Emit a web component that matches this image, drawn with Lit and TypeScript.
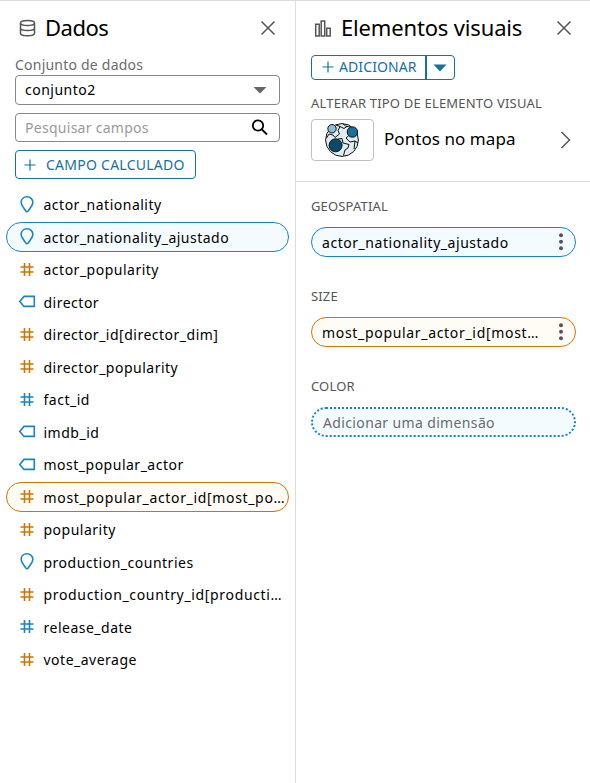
import { LitElement, html, css, svg, nothing } from "lit";
import { customElement, property } from "lit/decorators.js";

type Kind = "geo" | "number" | "text" | "date";
interface Field { name: string; kind: Kind; used?: boolean }

const FIELDS: Field[] = [
  { name: "actor_nationality", kind: "geo" },
  { name: "actor_nationality_ajustado", kind: "geo", used: true },
  { name: "actor_popularity", kind: "number" },
  { name: "director", kind: "text" },
  { name: "director_id[director_dim]", kind: "number" },
  { name: "director_popularity", kind: "number" },
  { name: "fact_id", kind: "date" },
  { name: "imdb_id", kind: "text" },
  { name: "most_popular_actor", kind: "text" },
  { name: "most_popular_actor_id[most_po…", kind: "number", used: true },
  { name: "popularity", kind: "number" },
  { name: "production_countries", kind: "geo" },
  { name: "production_country_id[producti…", kind: "number" },
  { name: "release_date", kind: "date" },
  { name: "vote_average", kind: "number" },
];

const pin = svg`<path d="M9 .8C5.7 .8 3.2 3.1 3.2 6.2C3.2 9.3 6 12.2 7.7 14.8Q9 16.6 10.3 14.8C12 12.2 14.8 9.3 14.8 6.2C14.8 3.1 12.3 .8 9 .8Z"/>`;
const hash = svg`<path d="M6.5 2V15M11.5 2V15M2.5 6H15.5M2.5 11H15.5"/>`;
const tag = svg`<path d="M6 3.4H16.3V13.4H6L1.8 8.4Z"/>`;

@customElement("field-icon")
export class FieldIcon extends LitElement {
  @property() kind: Kind = "text";
  static styles = css`
    :host { display: block; width: 18px; height: 18px; color: #1b84be; }
    :host([kind="number"]) { color: #cc7606; }
    svg { display: block; fill: none; stroke: currentColor; stroke-width: 1.6; }
  `;
  render() {
    const shape = this.kind === "geo" ? pin : this.kind === "text" ? tag : hash;
    return html`<svg width="18" height="18" viewBox="0 0 18 18">${shape}</svg>`;
  }
}

@customElement("field-well")
export class FieldWell extends LitElement {
  @property() label = "";
  @property() value = "";
  @property() tone = "dimension";
  static styles = css`
    :host { display: block; height: 90px; }
    .label { font-size: 13px; line-height: 18px; letter-spacing: 0.16px; color: #555; }
    .pill {
      box-sizing: border-box; height: 30px; width: 265px; margin-top: 12px; padding: 0 10px;
      display: flex; align-items: center; justify-content: space-between;
      border: 1px solid #1b84be; border-radius: 15px; background: #f3fbff;
      font-size: 14px; letter-spacing: 0.54px; color: #000; white-space: nowrap;
    }
    .measure { border-color: #cc7606; background: #fffcf5; letter-spacing: 0.68px; }
    .empty { border: 2px dotted #1b84be; color: #6b6b6b; letter-spacing: 0.36px; }
    svg { display: block; fill: #555; }
  `;
  render() {
    return html`
      <div class="label">${this.label}</div>
      <div class="pill ${this.tone}">
        <span>${this.value}</span>
        ${this.tone === "empty" ? nothing : html`<svg width="8" height="18" viewBox="0 0 8 18">
          <circle cx="4" cy="2.2" r="2"/><circle cx="4" cy="8.7" r="2"/><circle cx="4" cy="15.2" r="2"/></svg>`}
      </div>`;
  }
}

@customElement("app-root")
export class AppRoot extends LitElement {
  static styles = css`
    :host {
      display: grid; grid-template-columns: 295px 295px; box-sizing: border-box;
      width: 590px; height: 783px; overflow: hidden; background: #fff; color: #000;
      border-top: 1px solid #dcdcdc;
      font-family: "Noto Sans", "Open Sans", sans-serif; font-size: 14px; white-space: nowrap;
    }
    svg { display: block; flex: none; }
    .data { border-right: 1px solid #dcdcdc; box-sizing: border-box; width: 296px; }
    .head { display: flex; align-items: center; height: 54px; }
    .data .head { padding: 0 19px; }
    .visuals .head { padding: 0 18px 0 19px; }
    h1 { font-size: 22px; font-weight: 400; margin: -2px auto 0 9px; line-height: 30px; }
    .h-data { letter-spacing: -0.5px; }
    .h-visuals { letter-spacing: -0.16px; }
    .line { fill: none; stroke: #555; stroke-width: 1.5; }
    .body { padding: 0 15px; }
    .caption { line-height: 20px; color: #6b6b6b; letter-spacing: 0.22px; }
    .box {
      box-sizing: border-box; display: flex; align-items: center; justify-content: space-between;
      width: 265px; height: 30px; padding: 0 9px; border: 1px solid #878787; border-radius: 4px;
    }
    .dataset { letter-spacing: 0.5px; line-height: 20px; margin-top: -1px; }
    .search { margin-top: 8px; height: 29px; color: #999; letter-spacing: 0.28px; }
    .btn {
      box-sizing: border-box; display: inline-flex; align-items: center; color: #15719f;
      border: 1px solid #15719f; border-radius: 4px;
    }
    .plus { fill: none; stroke: currentColor; stroke-width: 1.2; }
    .calc { margin-top: 8px; width: 181px; height: 29px; padding-left: 8px; gap: 10px; letter-spacing: 0.25px; }
    .calc-text { margin-top: -1px; }
    .fields { padding: 10.5px 6px 0; }
    .field {
      box-sizing: border-box; display: flex; align-items: center; gap: 7.5px;
      width: 283px; height: 30px; margin-bottom: 2.5px; padding-left: 11px;
      border: 1px solid transparent; border-radius: 15px; letter-spacing: 0.5px;
    }
    .used { border-color: #1b84be; background: #f3fbff; }
    .used.number { border-color: #cc7606; background: #fffcf5; }
    .long { letter-spacing: 0.66px; }
    .vbody { padding: 0 0 0 15px; margin-left: 1px; }
    .add { width: 144px; height: 25px; }
    .addmain { display: flex; align-items: center; gap: 6px; width: 115px; height: 23px; padding-left: 10px; box-sizing: border-box; border-right: 2px solid #15719f; }
    .addmain .plus { margin-top: -1px; }
    .add-text { letter-spacing: 0.1px; margin-left: -1px; margin-top: -3px; }
    .addmore { flex: 1; display: flex; justify-content: center; padding-right: 1px; }
    .kicker { font-size: 13px; line-height: 18px; margin-top: 14px; color: #555; letter-spacing: 0.2px; }
    .type { display: flex; align-items: center; margin-top: 7px; }
    .thumb { box-sizing: border-box; width: 63px; height: 42px; border: 1px solid #bfbfbf; border-radius: 4px; display: flex; justify-content: center; align-items: center; }
    .globe { margin: -1px 1px 0 0; }
    .typename { font-size: 17px; line-height: 24px; margin: -2px 0 0 10px; flex: 1; letter-spacing: 0.06px; }
    .chev { margin-right: 18px; }
    .wells { border-top: 1px solid #dcdcdc; padding: 15px 0 0 16px; margin-top: 20px; }
  `;

  private close() {
    return html`<svg width="16" height="16" viewBox="0 0 16 16" class="line"><path d="M1.5 1.5L14.5 14.5M14.5 1.5L1.5 14.5"/></svg>`;
  }

  private plus() {
    return html`<svg width="12" height="12" viewBox="0 0 12 12" class="plus"><path d="M6 .5V11.5M.5 6H11.5"/></svg>`;
  }

  render() {
    return html`
      <section class="data">
        <div class="head">
          <svg width="17" height="18" viewBox="0 0 17 18" class="line"><ellipse cx="8.5" cy="4" rx="7" ry="2.5"/><path d="M1.5 4V14.2C1.5 17.6 15.5 17.6 15.5 14.2V4M1.5 9C1.5 12.4 15.5 12.4 15.5 9"/></svg>
          <h1 class="h-data">Dados</h1>
          ${this.close()}
        </div>
        <div class="body">
          <div class="caption">Conjunto de dados</div>
          <div class="box"><span class="dataset">conjunto2</span>
            <svg width="20" height="8" viewBox="0 0 20 8" fill="#666"><path d="M3.5 1H16.5L10 7.5Z"/></svg></div>
          <div class="box search"><span class="hint">Pesquisar campos</span>
            <svg width="20" height="18" viewBox="0 0 20 18" fill="none" stroke="#000" stroke-width="1.8"><circle cx="8" cy="6.5" r="5.2"/><path d="M11.8 10.3L17 15.5"/></svg></div>
          <div class="btn calc">${this.plus()}<span class="calc-text">CAMPO CALCULADO</span></div>
        </div>
        <div class="fields">
          ${FIELDS.map((f) => html`<div class="field ${f.kind} ${f.used ? "used" : ""} ${f.name.endsWith("…") ? "long" : ""}">
            <field-icon kind=${f.kind}></field-icon><span>${f.name}</span></div>`)}
        </div>
      </section>
      <section class="visuals">
        <div class="head">
          <svg width="18" height="17" viewBox="0 0 18 17" class="line"><path d="M1.7 4.2H5.2V16H1.7ZM7.2 .9H10.7V16H7.2ZM12.7 8.2H16.2V16H12.7Z"/></svg>
          <h1 class="h-visuals">Elementos visuais</h1>
          ${this.close()}
        </div>
        <div class="vbody">
          <div class="btn add"><span class="addmain">${this.plus()}<span class="add-text">ADICIONAR</span></span>
            <span class="addmore"><svg width="14" height="8" viewBox="0 0 14 8" fill="#15719f"><path d="M.5 .5H13.5L7 7.5Z"/></svg></span></div>
          <div class="kicker">ALTERAR TIPO DE ELEMENTO VISUAL</div>
          <div class="type">
            <span class="thumb">
              <svg class="globe" width="36" height="36" viewBox="0 0 36 36" fill="none" stroke="#111" stroke-width="1" stroke-linejoin="round">
                <circle cx="18" cy="18" r="16.4" fill="#e1ecf1"/>
                <path d="M12 3L16 4.5L14 8.5L15.5 12L11 15.5L9 13L5 12L2.5 16M16 4.5L20 6.5L23 4.5M19 1.8L21.5 4L26 5M14 17L18 16.5L19 21L25 22.5L24 26L21 28L19.5 33.5M24.5 14L22 16L26 20L31 19L34 21M31 19L30 27"/>
                <circle cx="8" cy="6.7" r="4.2" fill="#8dbdd4"/><circle cx="28.4" cy="10" r="5.2" fill="#15719f"/><circle cx="11.6" cy="23.3" r="6.5" fill="#0c4a69"/>
              </svg>
            </span>
            <span class="typename">Pontos no mapa</span>
            <svg width="12" height="18" viewBox="0 0 12 18" class="line chev"><path d="M1.5 1L9.5 9L1.5 17"/></svg>
          </div>
        </div>
        <div class="wells">
          <field-well label="GEOSPATIAL" value="actor_nationality_ajustado" tone="dimension"></field-well>
          <field-well label="SIZE" value="most_popular_actor_id[most…" tone="measure"></field-well>
          <field-well label="COLOR" value="Adicionar uma dimensão" tone="empty"></field-well>
        </div>
      </section>`;
  }
}
